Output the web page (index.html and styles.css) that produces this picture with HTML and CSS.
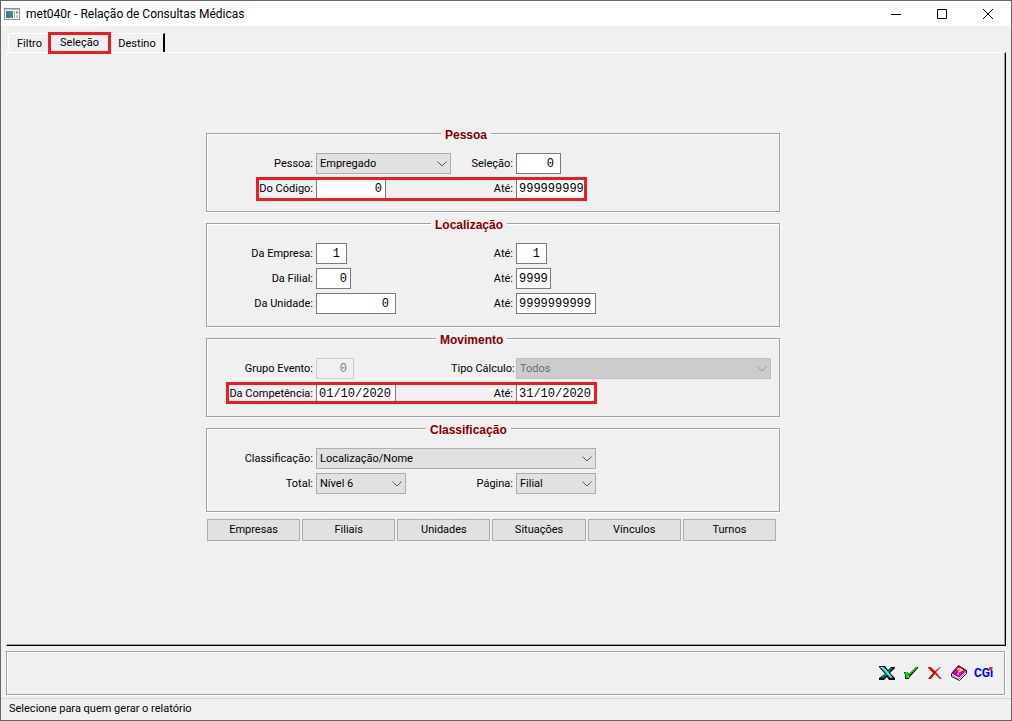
FILE: index.html
```html
<!DOCTYPE html>
<html lang="pt-BR">
<head>
<meta charset="utf-8">
<title>met040r - Relação de Consultas Médicas</title>
<link rel="stylesheet" href="styles.css">
</head>
<body>
<div class="window">
  <header class="titlebar">
    <svg class="app-icon" width="16" height="12" viewBox="0 0 16 12" aria-hidden="true">
      <rect x=".5" y=".5" width="15" height="11" fill="#fff" stroke="#8a8f96"/>
      <rect x="1" y="1" width="14" height="1" fill="#b9bfc8"/>
      <rect x="2" y="3" width="7" height="7" fill="#3a8f7c"/>
      <rect x="2" y="3" width="3" height="7" fill="#3f6fa8"/>
      <rect x="10" y="3" width="1" height="7" fill="#9aa"/>
      <rect x="12" y="3" width="2" height="3" fill="#7fb08a"/>
      <rect x="12" y="7" width="2" height="3" fill="#ccc"/>
    </svg>
    <h1 class="title">met040r - Relação de Consultas Médicas</h1>
    <div class="window-controls">
      <button type="button" class="window-button" aria-label="Minimizar"><svg width="12" height="12" viewBox="0 0 12 12"><path d="M1 6.500h10" stroke="#000"/></svg></button>
      <button type="button" class="window-button" aria-label="Maximizar"><svg width="12" height="12" viewBox="0 0 12 12"><path d="M1.500 1.500h9v9h-9z" fill="none" stroke="#000"/></svg></button>
      <button type="button" class="window-button" aria-label="Fechar"><svg width="12" height="12" viewBox="0 0 12 12"><path d="M1 1l10 10M11 1L1 11" stroke="#000"/></svg></button>
    </div>
  </header>

  <nav class="tabs" role="tablist">
    <button type="button" role="tab" class="tab tab-first" aria-selected="false">Filtro</button>
    <button type="button" role="tab" class="tab tab-selected" aria-selected="true">Seleção</button>
    <button type="button" role="tab" class="tab tab-last" aria-selected="false">Destino</button>
  </nav>

  <main class="panel">
    <form class="form">
      <fieldset class="group">
        <legend class="legend legend-pessoa">Pessoa</legend>
        <div class="fields">
          <label for="pessoa">Pessoa:</label>
          <select id="pessoa" class="select"><option>Empregado</option></select>
          <label for="selecao">Seleção:</label>
          <input id="selecao" class="input w-45 end-wide" value="0">
          <label for="codigo">Do Código:</label>
          <input id="codigo" class="input w-70 end" value="0">
          <label for="codigo-ate">Até:</label>
          <input id="codigo-ate" class="input w-70" value="999999999">
        </div>
        <div class="highlight highlight-codigo"></div>
      </fieldset>

      <fieldset class="group">
        <legend class="legend legend-localizacao">Localização</legend>
        <div class="fields">
          <label for="empresa">Da Empresa:</label>
          <input id="empresa" class="input w-31 end-wide" value="1">
          <label for="empresa-ate">Até:</label>
          <input id="empresa-ate" class="input w-31 end-wide" value="1">
          <label for="filial">Da Filial:</label>
          <input id="filial" class="input w-35 end" value="0">
          <label for="filial-ate">Até:</label>
          <input id="filial-ate" class="input w-35" value="9999">
          <label for="unidade">Da Unidade:</label>
          <input id="unidade" class="input w-80 end-wide" value="0">
          <label for="unidade-ate">Até:</label>
          <input id="unidade-ate" class="input w-80" value="9999999999">
        </div>
      </fieldset>

      <fieldset class="group">
        <legend class="legend legend-movimento">Movimento</legend>
        <div class="fields">
          <label for="evento">Grupo Evento:</label>
          <input id="evento" class="input w-38 end-wide" value="0" disabled>
          <label for="calculo">Tipo Cálculo:</label>
          <select id="calculo" class="select" disabled><option>Todos</option></select>
          <label for="competencia">Da Competência:</label>
          <input id="competencia" class="input w-80" value="01/10/2020">
          <label for="competencia-ate">Até:</label>
          <input id="competencia-ate" class="input w-80" value="31/10/2020">
        </div>
        <div class="highlight highlight-competencia"></div>
      </fieldset>

      <fieldset class="group group-tall">
        <legend class="legend legend-classificacao">Classificação</legend>
        <div class="fields">
          <label for="classificacao">Classificação:</label>
          <select id="classificacao" class="select select-span"><option>Localização/Nome</option></select>
          <label for="total">Total:</label>
          <select id="total" class="select w-90"><option>Nível 6</option></select>
          <label for="pagina">Página:</label>
          <select id="pagina" class="select w-80"><option>Filial</option></select>
        </div>
      </fieldset>

      <div class="actions">
        <button type="button" class="action">Empresas</button>
        <button type="button" class="action">Filiais</button>
        <button type="button" class="action">Unidades</button>
        <button type="button" class="action">Situações</button>
        <button type="button" class="action">Vínculos</button>
        <button type="button" class="action">Turnos</button>
      </div>
    </form>
  </main>

  <div class="toolbar">
    <button type="button" class="tool" aria-label="Excel"><svg width="18" height="16" viewBox="0 0 18 16">
      <path d="M1 1h6l3 4 3-3h4v1l-5 5 5 5v2h-6l-2-3-3 3H1v-2l6-4-6-7z" fill="#000"/>
      <path d="M13 3h2l-9 10H3l5-5z" fill="#008080"/>
      <path d="M2 2h4l9 11h-3z" fill="#2cc8cc"/>
      <path d="M3 2.500h2l8 9" fill="none" stroke="#8ff"/>
    </svg></button>
    <button type="button" class="tool" aria-label="Confirmar"><svg width="18" height="16" viewBox="0 0 18 16">
      <path d="M2 7h3l2 2 7-7h2v1L7 13v1H3V9L2 8z" fill="#000"/>
      <path d="M3 7h2l2 3 7-8h1v1L7 11v2H4z" fill="#00f000"/>
    </svg></button>
    <button type="button" class="tool" aria-label="Cancelar"><svg width="18" height="16" viewBox="0 0 18 16">
      <path d="M2 2h3l4 4 5-4h1l-5 5 4 5 2 2h-2L9 9l-4 5H2l5-6-5-5z" fill="#e01010"/>
      <path d="M3 14l5-6M6 5l3 3" stroke="#900" fill="none"/>
    </svg></button>
    <button type="button" class="tool" aria-label="Ajuda"><svg width="18" height="18" viewBox="0 0 18 18">
      <path d="M1.500 9.500L8.500 1.500 16.500 6.500V9.500L9.500 16.500 1.500 12.500z" fill="#fff" stroke="#400040"/>
      <path d="M2 9L8.500 2 16 6.500 9 13z" fill="#c800c8" stroke="#700070"/>
      <path d="M2 11.500l7 3.500 7-7" fill="none" stroke="#808080"/>
      <path d="M7 5.500l3-1 2 1.500-3 1.500v1M7.500 10h1.500" fill="none" stroke="#ff0" stroke-width="1.500"/>
    </svg></button>
    <button type="button" class="tool tool-cgi">CGi<span class="cgi-dot"></span></button>
  </div>

  <footer class="status">Selecione para quem gerar o relatório</footer>
</div>
</body>
</html>
```
FILE: styles.css
```css
* {
  box-sizing: border-box;
}

body {
  margin: 0;
  background: #f0f0f0;
  color: #000;
  font: 11px/14px Roboto, "Liberation Sans", Arial, sans-serif;
}

button,
input,
select {
  margin: 0;
  padding: 0;
  border: 0;
  border-radius: 0;
  color: inherit;
  font: inherit;
}

button {
  background: none;
}

.window {
  display: flex;
  flex-direction: column;
  min-height: 100vh;
  border: 1px solid #666;
}

.titlebar {
  display: flex;
  align-items: center;
  height: 25px;
  padding-left: 3px;
  background: #fff;
}

.title {
  flex: 1;
  margin: 0 0 0 6px;
  font: 12px/16px Roboto, "Noto Sans", sans-serif;
}

.window-controls {
  display: flex;
}

.window-button {
  display: grid;
  place-items: center;
  width: 46px;
  height: 25px;
}

.tabs {
  display: flex;
  align-items: flex-end;
  height: 26px;
  padding-left: 7px;
}

.tab {
  height: 19px;
  padding: 2px 8px 0;
  border-top: 1px solid #fff;
}

.tab-first {
  width: 40px;
  border-left: 1px solid #fff;
  border-top-left-radius: 3px;
}

.tab-selected {
  z-index: 1;
  width: 63px;
  height: 22px;
  margin-bottom: -2px;
  padding: 0;
  border: 3px solid #ed1c24;
  background: #f0f0f0;
}

.tab-last {
  width: 54px;
  padding: 2px 2px 0;
  border-right: 2px solid #000;
}

.panel {
  display: flex;
  flex: 1;
  justify-content: center;
  margin: 0 5px;
  padding: 71px 26px 16px 0;
  border: 1px solid;
  border-color: #fff #000 #000 #fff;
  box-shadow: inset -1px -1px 0 #a0a0a0;
}

.form {
  width: 574px;
}

.group {
  position: relative;
  min-width: 0;
  margin: 0 0 2px;
  padding: 11px 0 12px;
  border: 1px solid #a0a0a0;
  box-shadow: 1px 1px 0 #fff, inset 1px 1px 0 #fff;
}

.group-tall {
  padding-bottom: 17px;
}

.legend {
  padding: 4px 4px 0;
  background: #f0f0f0;
  color: #800000;
  font: bold 12px/14px "Liberation Sans", Arial, sans-serif;
}

.legend-pessoa {
  margin-left: 234px;
}

.legend-localizacao {
  margin-left: 224px;
}

.legend-movimento {
  margin-left: 229px;
}

.legend-classificacao {
  margin-left: 219px;
}

.fields {
  display: grid;
  grid-template-columns: 109px 135px 65px 255px;
  row-gap: 4px;
  align-items: center;
}

.fields label {
  padding-right: 3px;
  text-align: right;
  white-space: nowrap;
}

.input {
  height: 21px;
  padding: 0 2px;
  border: 1px solid #7a7a7a;
  background: #fff;
  font: 12px/18px "Liberation Mono", "Courier New", monospace;
}

.input:disabled {
  border-color: #ccc;
  background: #f0f0f0;
  color: #808080;
}

.end {
  padding-right: 3px;
  text-align: right;
}

.end-wide {
  padding-right: 6px;
  text-align: right;
}

.select {
  height: 21px;
  padding: 0 20px 0 3px;
  border: 1px solid #adadad;
  background: #e1e1e1 url("data:image/svg+xml,%3Csvg xmlns='http://www.w3.org/2000/svg' width='10' height='6'%3E%3Cpath d='M.5.5L5 5 9.500.5' fill='none' stroke='%23555'/%3E%3C/svg%3E") no-repeat right 3px center;
  appearance: none;
}

.select:disabled {
  border-color: #bfbfbf;
  background-color: #ccc;
  background-image: url("data:image/svg+xml,%3Csvg xmlns='http://www.w3.org/2000/svg' width='10' height='6'%3E%3Cpath d='M.5.5L5 5 9.500.5' fill='none' stroke='%23999'/%3E%3C/svg%3E");
  color: #6d6d6d;
  opacity: 1;
}

.select-span {
  grid-column: 2 / -1;
  width: 280px;
}

.w-31 { width: 31px; }
.w-35 { width: 35px; }
.w-38 { width: 38px; }
.w-45 { width: 45px; }
.w-70 { width: 70px; }
.w-80 { width: 80px; }
.w-90 { width: 90px; }

.highlight {
  position: absolute;
  border: 3px solid #ed1c24;
  pointer-events: none;
}

.highlight-codigo {
  bottom: 10px;
  left: 49px;
  width: 331px;
  height: 24px;
}

.highlight-competencia {
  bottom: 12px;
  left: 19px;
  width: 371px;
  height: 22px;
}

.actions {
  display: grid;
  grid-template-columns: repeat(6, 1fr);
  gap: 2px;
  margin: 7px 4px 0 1px;
}

.action {
  height: 22px;
  border: 1px solid #adadad;
  background: #e1e1e1;
}

.toolbar {
  display: flex;
  align-items: center;
  justify-content: flex-end;
  gap: 6px;
  height: 44px;
  margin: 5px 6px 0 5px;
  padding-right: 12px;
  border: 1px solid #a0a0a0;
  box-shadow: 1px 1px 0 #fff, inset 1px 1px 0 #fff;
}

.tool {
  position: relative;
  display: grid;
  place-items: center;
  width: 18px;
  height: 20px;
}

.tool-cgi {
  color: #00f;
  font: bold 12px/14px Roboto, "Liberation Sans", sans-serif;
}

.cgi-dot {
  position: absolute;
  top: 4px;
  right: 0;
  width: 3px;
  height: 3px;
  background: #f03020;
}

.status {
  height: 22px;
  margin-top: 3px;
  padding: 3px 8px 0;
  border-top: 1px solid #d7d7d7;
}
```
